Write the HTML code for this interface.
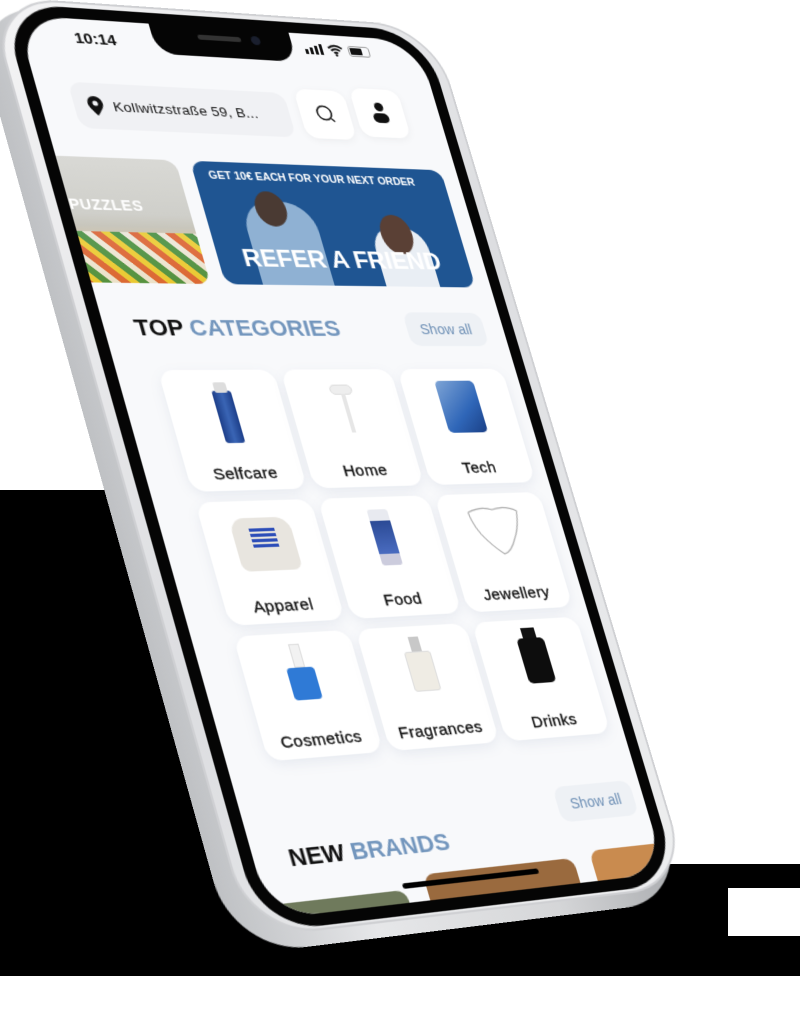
<!DOCTYPE html>
<html><head><meta charset="utf-8">
<style>
*{margin:0;padding:0;box-sizing:border-box}
html,body{width:800px;height:1009px;overflow:hidden;background:#fff;font-family:"Liberation Sans",sans-serif}
.abs{position:absolute}
#stage{position:absolute;left:0;top:0;width:390px;height:844px;transform-origin:0 0;
transform:matrix3d(1.11836,0.075538,0,0.00021618, 0.288033,1.027121,0,-0.000047844, 0,0,1,0, 16,15,0,1)}
.tile{position:absolute;width:108px;height:115px;background:#fff;border-radius:14px;box-shadow:0 4px 12px rgba(120,140,170,.13)}
.lbl{position:absolute;left:0;right:0;top:91px;text-align:center;font-size:15.5px;color:#111;letter-spacing:.4px;-webkit-text-stroke:.3px #111}
.img{position:absolute}
</style></head><body>
<div class="abs" style="left:0;top:490px;width:400px;height:486px;background:#000"></div>
<div class="abs" style="left:0;top:864px;width:800px;height:112px;background:#000"></div>
<div class="abs" style="left:728px;top:888px;width:72px;height:48px;background:#fff"></div>

<div id="stage">
  <div class="abs" style="left:-40px;top:-8px;width:444px;height:880px;border-radius:66px;background:linear-gradient(90deg,#bfc1c4,#e6e7e9 30%,#d5d6d8 70%,#a9abae)"></div>
  <div class="abs" style="left:-22px;top:-17px;width:434px;height:876px;border-radius:64px;background:linear-gradient(135deg,#f4f4f5,#dcdde0 50%,#eeeff0);border:2px solid #cfd0d3"></div>
  <div class="abs" style="left:-11px;top:-11px;width:412px;height:866px;border-radius:56px;background:#050505"></div>
  <div class="abs" style="left:0;top:0;width:390px;height:844px;border-radius:46px;background:#f8f9fb;overflow:hidden">
    <div class="abs" style="left:122px;top:-2px;width:136px;height:32px;background:#050505;border-radius:0 0 20px 20px"></div>
    <div class="abs" style="left:166px;top:8px;width:42px;height:5px;background:#333;border-radius:3px"></div>
    <div class="abs" style="left:218px;top:6px;width:9px;height:9px;background:#1a1f2e;border-radius:50%"></div>
    <div class="abs" style="left:48px;top:11px;font-size:15px;font-weight:bold;color:#111">10:14</div>
    <div class="abs" style="left:270px;top:16px;width:3px;height:5px;background:#111"></div>
    <div class="abs" style="left:275px;top:14px;width:3px;height:7px;background:#111"></div>
    <div class="abs" style="left:280px;top:12px;width:3px;height:9px;background:#111"></div>
    <div class="abs" style="left:285px;top:10px;width:3px;height:11px;background:#111"></div>
    <svg class="abs" style="left:293px;top:9px" width="16" height="13" viewBox="0 0 16 13"><path d="M1 4.5Q8 -1 15 4.5M3.5 7Q8 3.5 12.5 7M6 9.5Q8 8 10 9.5" stroke="#111" stroke-width="2" fill="none"/><circle cx="8" cy="11.5" r="1.3" fill="#111"/></svg>
    <div class="abs" style="left:314px;top:10px;width:22px;height:11px;border:1.5px solid #999;border-radius:3px"><div style="width:12px;height:7px;background:#111;margin:0.5px;border-radius:1px"></div></div>
    <div class="abs" style="left:30px;top:63px;width:205px;height:45px;border-radius:12px;background:#f0f1f4"></div>
    <svg class="abs" style="left:42px;top:76px" width="16" height="20" viewBox="0 0 16 20"><path d="M8 19C3 13 1 10 1 7A7 7 0 0 1 15 7C15 10 13 13 8 19Z" fill="#111"/><circle cx="8" cy="7" r="2.5" fill="#f0f1f4"/></svg>
    <div class="abs" style="left:66px;top:78px;font-size:13.5px;color:#111;letter-spacing:.3px">Kollwitzstraße 59, B...</div>
    <div class="abs" style="left:246px;top:58px;width:50px;height:50px;border-radius:12px;background:#fff;box-shadow:0 2px 8px rgba(0,0,0,.05)"></div>
    <svg class="abs" style="left:261px;top:72px" width="22" height="22" viewBox="0 0 22 22"><circle cx="9.5" cy="9.5" r="7" stroke="#111" stroke-width="1.6" fill="none"/><path d="M15 15L18 18" stroke="#111" stroke-width="1.6"/></svg>
    <div class="abs" style="left:303px;top:54px;width:50px;height:50px;border-radius:12px;background:#fff;box-shadow:0 2px 8px rgba(0,0,0,.05)"></div>
    <div class="abs" style="left:324px;top:68px;width:9px;height:9px;border-radius:50%;background:#111"></div>
    <div class="abs" style="left:320px;top:79px;width:16px;height:10px;border-radius:8px;background:#111"></div>
    <div class="abs" style="left:-40px;top:136px;width:150px;height:121px;border-radius:12px;overflow:hidden;background:linear-gradient(180deg,#d9d9d5 0%,#cfcfca 45%,#c8c6bc 55%,#d8c7a6 70%,#c9a54f 100%)">
      <div class="abs" style="left:0;top:72px;width:150px;height:49px;background:repeating-linear-gradient(45deg,#e05a2b 0 6px,#f2d12a 6px 12px,#3a8d3a 12px 18px,#f4f0e6 18px 24px);opacity:.8"></div>
      <div class="abs" style="left:40px;top:38px;font-size:14px;font-weight:bold;color:#fff;letter-spacing:.5px">PUZZLES</div>
    </div>
    <div class="abs" style="left:124px;top:136px;width:250px;height:121px;border-radius:12px;overflow:hidden;background:#1f5592">
      <div class="abs" style="left:36px;top:38px;width:70px;height:90px;border-radius:30px 30px 0 0;background:#8fb1d3"></div>
      <div class="abs" style="left:50px;top:28px;width:30px;height:35px;border-radius:50%;background:#4a3a33"></div>
      <div class="abs" style="left:158px;top:60px;width:55px;height:70px;border-radius:25px 25px 0 0;background:#e9eef4"></div>
      <div class="abs" style="left:168px;top:48px;width:32px;height:40px;border-radius:50%;background:#5a4035"></div>
      <div class="abs" style="left:14px;top:8px;font-size:10.5px;font-weight:bold;color:#fff;white-space:nowrap;letter-spacing:0">GET 10€ EACH FOR YOUR NEXT ORDER</div>
      <div class="abs" style="left:24px;top:82px;font-size:24px;font-weight:bold;color:#fff;white-space:nowrap;letter-spacing:-.2px">REFER A FRIEND</div>
    </div>
    <div class="abs" style="left:28px;top:287px;font-size:22px;font-weight:bold;color:#111;white-space:nowrap">TOP <span style="color:#7396bd">CATEGORIES</span></div>
    <div class="abs" style="left:290px;top:283px;width:80px;height:34px;border-radius:10px;background:#eef1f5;color:#6d8fb5;font-size:14px;text-align:center;line-height:34px">Show all</div>

    <div class="tile" style="left:38px;top:340px"><div class="img" style="left:44px;top:20px;width:18px;height:50px;border-radius:3px;background:linear-gradient(90deg,#1d3f8a,#3a65b5,#1d3f8a)"></div><div class="img" style="left:47px;top:12px;width:12px;height:10px;background:#ddd;border-radius:2px"></div><div class="lbl">Selfcare</div></div>
    <div class="tile" style="left:153px;top:340px"><div class="img" style="left:42px;top:15px;width:22px;height:10px;border-radius:6px;background:#eee;border:1px solid #ddd"></div><div class="img" style="left:52px;top:24px;width:4px;height:38px;background:#e6e6e6"></div><div class="lbl">Home</div></div>
    <div class="tile" style="left:268px;top:340px"><div class="img" style="left:34px;top:12px;width:40px;height:52px;border-radius:5px;background:linear-gradient(135deg,#7fa5d6,#2f66b8 60%,#1a3f85)"></div><div class="lbl">Tech</div></div>

    <div class="tile" style="left:38px;top:465px"><div class="img" style="left:26px;top:16px;width:56px;height:50px;border-radius:14px 14px 8px 8px;background:#e8e5df"></div><div class="img" style="left:42px;top:26px;width:24px;height:20px;background:repeating-linear-gradient(180deg,#2c4db8 0 3px,#e8e5df 3px 5px)"></div><div class="lbl">Apparel</div></div>
    <div class="tile" style="left:153px;top:465px"><div class="img" style="left:44px;top:12px;width:20px;height:54px;border-radius:3px;background:linear-gradient(180deg,#e8eaf0 0 20%,#2b4a95 20%,#4a6cc0 80%,#ccd 80%)"></div><div class="lbl">Food</div></div>
    <div class="tile" style="left:268px;top:465px"><svg class="img" style="left:24px;top:10px" width="60" height="55" viewBox="0 0 60 55"><path d="M5 8Q20 2 30 6Q45 2 55 8Q52 25 45 35Q38 48 30 50Q20 42 12 30Q6 20 5 8" stroke="#aaa" stroke-width="1.2" fill="none"/></svg><div class="lbl">Jewellery</div></div>

    <div class="tile" style="left:38px;top:590px"><div class="img" style="left:48px;top:10px;width:10px;height:22px;background:#f2f2f2;border:1px solid #ddd"></div><div class="img" style="left:40px;top:32px;width:26px;height:30px;border-radius:4px;background:#2f7ad6"></div><div class="lbl">Cosmetics</div></div>
    <div class="tile" style="left:153px;top:590px"><div class="img" style="left:48px;top:10px;width:10px;height:14px;background:#c8c8c8"></div><div class="img" style="left:40px;top:24px;width:26px;height:38px;border-radius:3px;background:#efece4;border:1px solid #ddd"></div><div class="lbl">Fragrances</div></div>
    <div class="tile" style="left:268px;top:590px"><div class="img" style="left:47px;top:8px;width:14px;height:12px;background:#111"></div><div class="img" style="left:40px;top:18px;width:28px;height:44px;border-radius:5px;background:#0d0d0d"></div><div class="lbl">Drinks</div></div>

    <div class="abs" style="left:300px;top:752px;width:80px;height:34px;border-radius:10px;background:#eef1f5;color:#6d8fb5;font-size:14px;text-align:center;line-height:34px">Show all</div>
    <div class="abs" style="left:32px;top:780px;font-size:22px;font-weight:bold;color:#111;white-space:nowrap">NEW <span style="color:#7396bd">BRANDS</span></div>
    <div class="abs" style="left:-10px;top:832px;width:140px;height:40px;border-radius:10px;background:#6f7a5c"></div>
    <div class="abs" style="left:150px;top:820px;width:150px;height:40px;border-radius:10px;background:#9a6a3e"></div>
    <div class="abs" style="left:318px;top:815px;width:120px;height:40px;border-radius:10px;background:#c98b4f"></div>
    <div class="abs" style="left:128px;top:826px;width:134px;height:5px;border-radius:3px;background:#000"></div>
  </div>
</div>
</body></html>
